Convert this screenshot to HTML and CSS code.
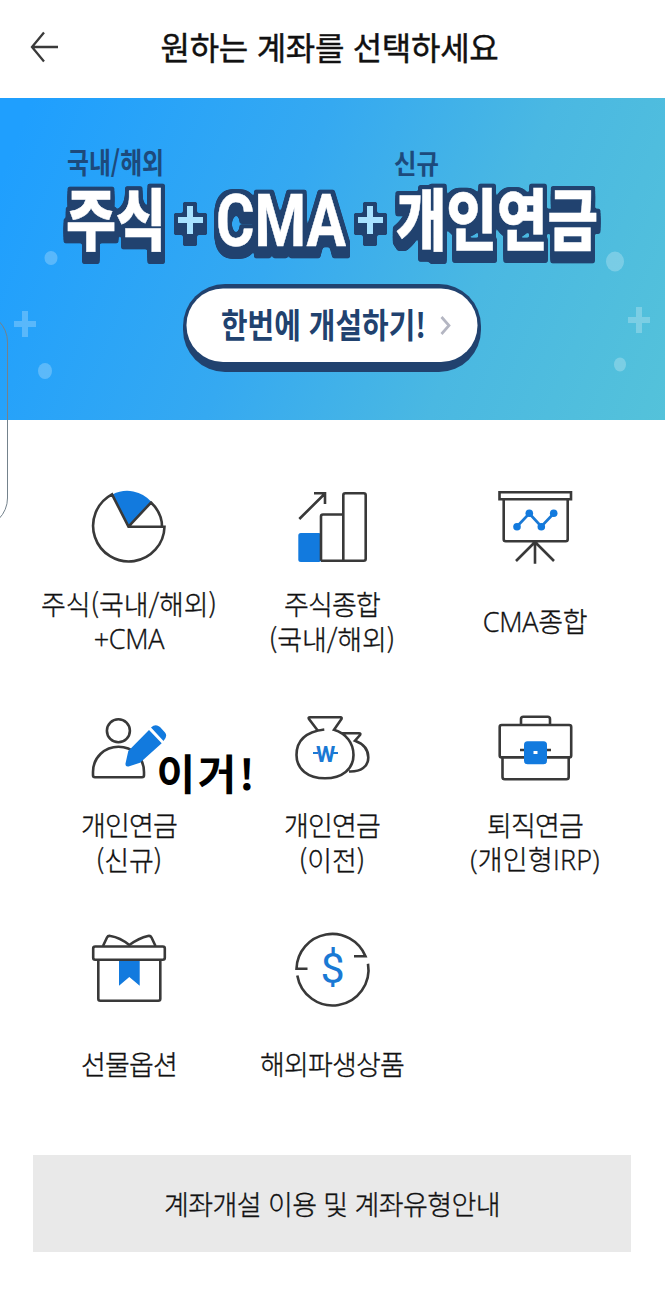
FILE: index.html
```html
<!DOCTYPE html>
<html lang="ko">
<head>
<meta charset="utf-8">
<title>원하는 계좌를 선택하세요</title>
<link rel="stylesheet" href="styles.css">
</head>
<body>
<div class="screen">
  <header class="topbar">
    <svg class="back" viewBox="0 0 30 34"><path d="M15 2.500 3 17l12 14.500M3 17h26"/></svg>
    <h1 class="title">원하는 계좌를 선택하세요</h1>
  </header>

  <svg class="banner" viewBox="0 98 665 322">
    <defs>
      <!-- rounded navy outline extruded downwards -->
      <filter id="extrude" filterUnits="userSpaceOnUse" x="40" y="165" width="590" height="120" color-interpolation-filters="sRGB">
        <feMorphology in="SourceAlpha" operator="dilate" radius="4" result="fat"/>
        <feGaussianBlur in="fat" stdDeviation="1.300"/>
        <feComponentTransfer result="shape"><feFuncA type="linear" slope="4" intercept="-1.400"/></feComponentTransfer>
        <feOffset in="shape" dy="3" result="o1"/>
        <feOffset in="shape" dy="6" result="o2"/>
        <feOffset in="shape" dy="8" result="o3"/>
        <feMerge result="body"><feMergeNode in="o3"/><feMergeNode in="o2"/><feMergeNode in="o1"/><feMergeNode in="shape"/></feMerge>
        <feFlood flood-color="#21426f"/>
        <feComposite in2="body" operator="in" result="navy"/>
        <feMerge><feMergeNode in="navy"/><feMergeNode in="SourceGraphic"/></feMerge>
      </filter>
    </defs>
    <g class="decor">
      <ellipse cx="51" cy="258" rx="6.500" ry="7"/>
      <ellipse cx="45" cy="371" rx="7" ry="8"/>
      <ellipse cx="615" cy="261.500" rx="9" ry="10"/>
      <ellipse cx="620" cy="364.500" rx="6" ry="7"/>
      <path d="M22 311h6v10h8v6h-8v10h-6v-10h-8v-6h8zM636 307h6v10h8v6h-8v10h-6v-10h-8v-6h8z"/>
    </g>
    <text class="tag" x="67" y="173.500" textLength="97" lengthAdjust="spacingAndGlyphs">국내/해외</text>
    <text class="tag small" x="394" y="173.500" textLength="45" lengthAdjust="spacingAndGlyphs">신규</text>
    <g class="headline" filter="url(#extrude)">
      <text x="66" y="244.500" textLength="100" lengthAdjust="spacingAndGlyphs">주식</text>
      <text class="latin" x="216" y="245.500" textLength="130" lengthAdjust="spacingAndGlyphs">CMA</text>
      <text x="396" y="244.500" textLength="202" lengthAdjust="spacingAndGlyphs">개인연금</text>
      <path class="plus" d="M187 206h6v11h10v6h-10v11h-6v-11h-9v-6h9zM367 206h6v11h10v6h-10v11h-6v-11h-9v-6h9z"/>
    </g>
    <rect class="pill-edge" x="183" y="284" width="298" height="88" rx="42"/>
    <rect class="pill" x="186.500" y="288.500" width="291" height="73.500" rx="36.500"/>
    <text class="cta" x="221" y="338" textLength="205" lengthAdjust="spacingAndGlyphs">한번에 개설하기!</text>
    <path class="chevron" d="m441.500 317 7.500 8.500-7.500 8.500"/>
  </svg>

  <main class="grid">
    <div class="item">
      <svg class="icon" viewBox="0 0 80 80">
        <path class="fill" d="M23.500 7.500A32 32 0 0 1 62.500 15L39.500 40z"/>
        <path d="M39.500 39.700H75.500A35.700 35.700 0 1 1 23 7.300zL62 15.500Q73 26 73 39.500"/>
      </svg>
      <div class="label"><span class="loose">주식(국내/해외)</span><span class="roman">+CMA</span></div>
    </div>
    <div class="item">
      <svg class="icon" viewBox="0 0 80 80">
        <rect class="fill" x="6.300" y="46" width="23" height="29" rx="2.500"/>
        <path d="M29 73.700V29.500q0-2 2-2H51.300M29 73.700H71.700q2 0 2-2V8.300q0-2-2-2H53.300q-2 0-2 2V73.700M7.300 32 32.500 7M22 6.300H33V17"/>
      </svg>
      <div class="label"><span>주식종합</span><span class="loose">(국내/해외)</span></div>
    </div>
    <div class="item">
      <svg class="icon" viewBox="0 0 80 80">
        <path d="M4.500 5.300H76v7H4.500zM8.700 12.300V52.300q0 2 2 2H70.700q2 0 2-2V12.300M40 54.300V76.700M40 55 21 74M40 55l19 19"/>
        <path class="accent" d="M22 39.500 34.300 26.500 46.300 39.500 58.700 26.500"/>
        <g class="fill"><circle cx="22" cy="39.700" r="3.800"/><circle cx="34.300" cy="26.300" r="3.800"/><circle cx="46.300" cy="39.700" r="3.800"/><circle cx="58.700" cy="26.300" r="3.800"/></g>
      </svg>
      <div class="label"><span class="roman">CMA종합</span></div>
    </div>

    <div class="item">
      <svg class="icon" viewBox="0 0 80 80">
        <circle cx="29.400" cy="22.700" r="11.500"/>
        <path d="M6 69.300H53q2 0 2-2V64C55 49 43 38.700 29.500 38.700S4 49 4 64v3.300q0 2 2 2z"/>
        <path class="fill" d="M36.500 55.500 39.300 43 60 22 72.700 35.300 51 54.700 39.500 58.500Q36 59 36.500 55.500zM62 19.500Q66.500 15.500 71 19L76 24.500Q79 28 74.500 33z"/>
      </svg>
      <div class="label"><span>개인연금</span><span class="loose">(신규)</span></div>
      <span class="note">이거!</span>
    </div>
    <div class="item">
      <svg class="icon" viewBox="0 0 80 80">
        <path d="M32.300 21.500Q4.500 25 4.500 47C4.500 61 16 70.300 33 70.300S61.500 61 61.500 47C61.500 35 54 25.500 42 21.800L49.500 11Q50 9.300 48.500 9.300H18Q16 9.300 17 11L25.500 22.300M50 25.300H67Q69 25.300 68 27L63 32.700C72 36 76.300 42.500 76.300 49.500C76.300 58.500 69 64 57 63.500"/>
        <text class="won" x="33.500" y="53.500" text-anchor="middle">W</text>
        <path class="accent thin" d="M21 45H26M41 45H46"/>
      </svg>
      <div class="label"><span>개인연금</span><span class="loose">(이전)</span></div>
    </div>
    <div class="item">
      <svg class="icon" viewBox="0 0 80 80">
        <path d="M26 17V11q0-2.300 2.300-2.300H52.700q2.300 0 2.300 2.300V17M25 42H56M7.500 49.300V69q0 2.300 2.300 2.300H71.400q2.300 0 2.300-2.300V49.300"/>
        <rect x="4.700" y="17" width="71.500" height="32.400" rx="2"/>
        <rect class="fill" x="29" y="33.300" width="23" height="23" rx="3.500"/>
        <rect class="hole" x="38.500" y="43" width="4" height="3"/>
      </svg>
      <div class="label"><span>퇴직연금</span><span class="roman irp">(개인형IRP)</span></div>
    </div>

    <div class="item">
      <svg class="icon" viewBox="0 0 80 80">
        <path class="fill" d="M30 31H50.700V56.700L40.300 48 30 56.700z"/>
        <path d="M9.300 30.700V69.700q0 2 2 2H69.300q2 0 2-2V30.700M14 17 18 8.500Q19 6.500 21.500 7Q31 8.500 40.300 16Q50 9 59 7Q61.500 6.500 62.500 8.500L66.500 17"/>
        <rect x="4.200" y="17.500" width="71.600" height="13.200" rx="2"/>
      </svg>
      <div class="label"><span>선물옵션</span></div>
    </div>
    <div class="item">
      <svg class="icon" viewBox="0 0 80 80">
        <path d="M15.500 39.700H4.500A35.800 35.800 0 0 1 73.500 27.300H62M76 34.700A35.800 35.800 0 0 1 5.300 46.500"/>
        <text class="dollar" x="40.500" y="54" text-anchor="middle">$</text>
      </svg>
      <div class="label"><span>해외파생상품</span></div>
    </div>
  </main>

  <div class="guide">계좌개설 이용 및 계좌유형안내</div>
  <div class="edge"></div>
</div>
</body>
</html>
```
FILE: styles.css
```css
* { box-sizing: border-box; }
body {
  margin: 0;
  background: #fff;
  color: #111;
  font-family: "Noto Sans CJK KR", sans-serif;
}
.screen {
  position: relative;
  width: 665px;
  height: 1307px;
  overflow: hidden;
}
.topbar {
  height: 98px;
  padding: 0 65px 4px 29px;
  display: flex;
  align-items: center;
}
.back {
  width: 30px;
  height: 34px;
  fill: none;
  stroke: #3a3a3a;
  stroke-width: 2.3;
}
.title {
  flex: 1;
  margin: 0;
  padding-bottom: 3px;
  text-align: center;
  font-size: 32px;
  font-weight: 400;
  -webkit-text-stroke: .45px #111;
  line-height: 48px;
  letter-spacing: -0.3px;
}
.banner {
  display: block;
  width: 665px;
  height: 322px;
  background: linear-gradient(112deg, #1f9ffe 4%, #35a9f1 42%, #4ab8e2 70%, #54c2da 100%);
}
.decor { fill: #fff; opacity: .24; }
.tag { font-size: 29px; font-weight: 700; fill: #1d4a7c; }
.tag.small { font-size: 27px; }
.headline {
  font-size: 67px;
  font-weight: 900;
  fill: #fff;
}
.headline text {
  stroke: #fff;
  stroke-width: .5px;
}
.headline .latin {
  font-family: Roboto, sans-serif;
  font-size: 73px;
  font-weight: 700;
}
.plus { fill: #a8e2ff; }
.pill-edge { fill: #21426f; }
.pill { fill: #fff; }
.cta { font-size: 34px; font-weight: 700; fill: #21426f; }
.chevron { fill: none; stroke: #b4b6c2; stroke-width: 2.7; }

.grid {
  display: grid;
  grid-template-columns: repeat(3, 203px);
  grid-auto-rows: 170px;
  row-gap: 51px;
  padding: 67px 0 0 27.5px;
}
.item {
  position: relative;
  display: flex;
  flex-direction: column;
  align-items: center;
  gap: 19px;
}
.icon {
  width: 80px;
  height: 80px;
  flex: none;
  fill: none;
  stroke: #393939;
  stroke-width: 2.6;
}
.icon .fill { fill: #127ade; stroke: none; }
.icon .hole { fill: #fff; stroke: none; }
.icon .accent { stroke: #1a79d4; stroke-width: 2.6; }
.icon .thin { stroke-width: 2; }
.won, .dollar { fill: #1a79d4; stroke: none; font-family: Roboto, sans-serif; }
.won { font-size: 22px; font-weight: 700; }
.dollar { font-size: 43px; font-weight: 400; }
.label {
  height: 70px;
  display: grid;
  align-content: center;
  text-align: center;
  white-space: nowrap;
  font-size: 27px;
  font-weight: 300;
  -webkit-text-stroke: .35px #111;
  line-height: 35px;
  letter-spacing: -0.8px;
}
.loose { letter-spacing: -0.1px; }
.roman {
  font-family: "Open Sans", "Noto Sans CJK KR", sans-serif;
  letter-spacing: -0.3px;
}
.irp { letter-spacing: 0.2px; }
.note {
  position: absolute;
  left: 129px;
  top: 36px;
  font-size: 42px;
  font-weight: 700;
  line-height: 56px;
  letter-spacing: 2.6px;
  color: #000;
  white-space: nowrap;
}
.guide {
  margin: 56px 34px 0 33px;
  height: 97px;
  padding-bottom: 1px;
  display: flex;
  align-items: center;
  justify-content: center;
  background: #e9e9e9;
  font-size: 27px;
  font-weight: 300;
  -webkit-text-stroke: .35px #111;
  letter-spacing: -0.6px;
}
.edge {
  position: absolute;
  left: -60px;
  top: 312px;
  width: 68px;
  height: 216px;
  border: 1px solid #74828c;
  border-radius: 30px;
}
```
